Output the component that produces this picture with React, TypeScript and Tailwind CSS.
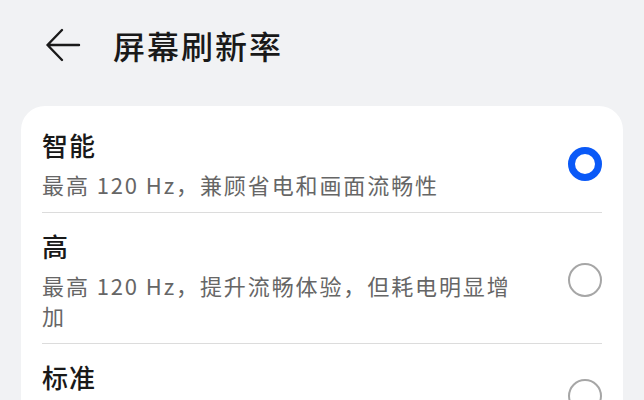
import React, { useState } from 'react';

type Option = { id: string; title: string; desc: string };

const options: Option[] = [
  { id: 'smart', title: '智能', desc: '最高 120 Hz，兼顾省电和画面流畅性' },
  { id: 'high', title: '高', desc: '最高 120 Hz，提升流畅体验，但耗电明显增加' },
  { id: 'std', title: '标准', desc: '固定 60 Hz，更省电' },
];

function Radio({ checked }: { checked: boolean }) {
  return checked ? (
    <div className="w-[34px] h-[34px] rounded-full border-[7.5px] border-[#0a59f7] bg-white shrink-0" />
  ) : (
    <div className="w-[34px] h-[34px] rounded-full border-2 border-[#a6a6a6] bg-white shrink-0" />
  );
}

export default function App() {
  const [selected, setSelected] = useState('smart');

  return (
    <div
      className="min-h-[400px] bg-[#f1f2f4] text-[#191919]"
      style={{ fontFamily: '"Noto Sans CJK SC", "Noto Sans", sans-serif' }}
    >
      {/* header */}
      <div className="h-[89px] flex items-center">
        <button className="ml-[45px] w-[36px] h-[36px] flex items-center justify-center">
          <svg width="36" height="36" viewBox="0 0 36 36" fill="none">
            <path
              d="M34 18H2.5M17 3L2.5 18L17 33"
              stroke="#1a1a1a"
              strokeWidth="2.4"
              strokeLinecap="round"
              strokeLinejoin="round"
            />
          </svg>
        </button>
        <h1 className="ml-[32px] text-[32px] leading-[40px] font-medium tracking-[2px]">
          屏幕刷新率
        </h1>
      </div>

      {/* options card */}
      <div className="mt-[17px] mx-[21px] rounded-[24px] bg-white px-[21px] pt-[6px]">
        {options.map((o, i) => (
          <div key={o.id}>
            {i > 0 && <div className="h-px bg-[#dcdcdc]" />}
            <div
              className="flex items-center pt-[17px] pb-[13px] cursor-pointer"
              onClick={() => setSelected(o.id)}
            >
              <div className="flex-1 min-w-0">
                <div className="text-[26px] leading-[32px] font-medium tracking-[1px]">
                  {o.title}
                </div>
                <div className="mt-[8px] w-[480px] text-[22px] leading-[30px] tracking-[1.9px] text-[#666666]">
                  {o.desc}
                </div>
              </div>
              <Radio checked={selected === o.id} />
            </div>
          </div>
        ))}
      </div>
    </div>
  );
}
